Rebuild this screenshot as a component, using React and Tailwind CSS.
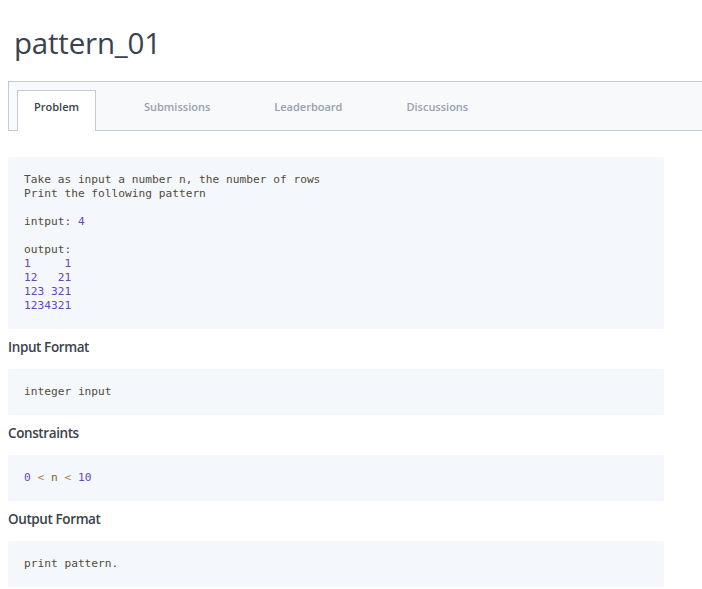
const tabs = ['Problem', 'Submissions', 'Leaderboard', 'Discussions'];

const P = ({ children }) => <span className="text-[#6a44b8]">{children}</span>;
const O = ({ children }) => <span className="text-[#b3832f]">{children}</span>;

function CodeBlock({ children }) {
  return (
    <pre className="w-[656px] bg-[#f4f8fd] px-4 pt-4 pb-[16px] font-['DejaVu_Sans_Mono',monospace] text-[11.2px] leading-[14px] text-[#524c39] whitespace-pre">
      {children}
    </pre>
  );
}

function Heading({ children }) {
  return (
    <h3 className="mt-[8px] mb-[12px] text-[13.5px] leading-[20px] font-semibold text-[#39424e] tracking-[-0.4px]">
      {children}
    </h3>
  );
}

export default function App() {
  return (
    <div className="min-h-screen overflow-hidden bg-white font-['Open_Sans',sans-serif] pl-2">
      <h1 className="mt-[24px] pl-[6px] text-[29.5px] leading-[38px] text-[#39424e] tracking-[-0.2px]">pattern_01</h1>

      {/* Tabs */}
      <div className="mt-[19px] -mr-4 flex h-[50px] gap-8 border border-[#c6cbd3] bg-[#f8f9fa] pl-2 pt-2">
        {tabs.map((t, i) => (
          <div
            key={t}
            className={
              i === 0
                ? 'relative h-[41px] border border-b-0 border-[#c6cbd3] bg-white px-[16px] pt-[9px] text-[11px] leading-[14px] font-semibold text-[#39424e]'
                : 'h-[41px] px-[16px] pt-[10px] text-[11px] leading-[14px] font-semibold text-[#979faf]'
            }
          >
            {t}
          </div>
        ))}
      </div>

      <div className="mt-[26px]">
        <CodeBlock>
          {'Take as input a number n, the number of rows\nPrint the following pattern\n\nintput: '}
          <P>4</P>
          {'\n\noutput:\n'}
          <P>{'1     1\n12   21\n123 321\n1234321'}</P>
        </CodeBlock>

        <Heading>Input Format</Heading>
        <CodeBlock>integer input</CodeBlock>

        <Heading>Constraints</Heading>
        <CodeBlock>
          <P>0</P> <O>&lt;</O> <span className="text-[#7a6324]">n</span> <O>&lt;</O> <P>10</P>
        </CodeBlock>

        <Heading>Output Format</Heading>
        <CodeBlock>print pattern.</CodeBlock>
      </div>
    </div>
  );
}
